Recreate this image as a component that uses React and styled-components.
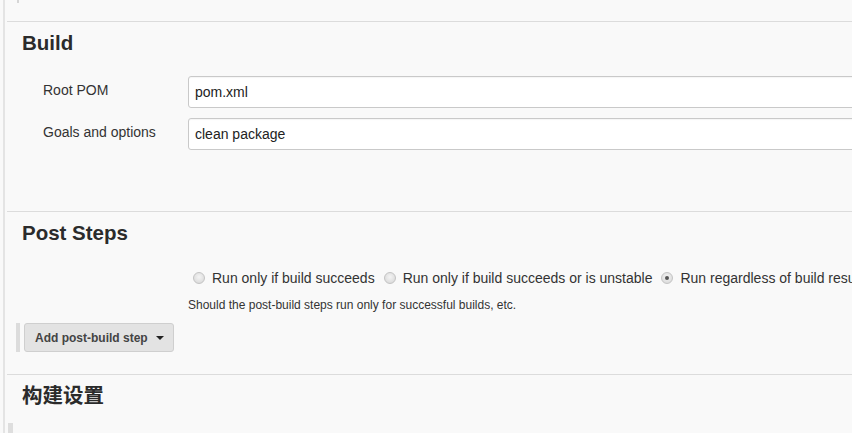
import React from "react";
import styled, { createGlobalStyle } from "styled-components";

const GlobalStyle = createGlobalStyle`
  html, body {
    margin: 0;
    padding: 0;
    background: #f9f9f9;
    overflow: hidden;
  }
  body {
    font-family: "Liberation Sans", Arial, "Noto Sans CJK SC", sans-serif;
    color: #333;
  }
`;

const Page = styled.div`
  width: 1000px;
  min-height: 440px;
  margin-left: 3px;
  border-left: 2px solid #e4e4e4;
  padding-left: 2px;
  display: flex;
  flex-direction: column;
  & > * {
    flex-shrink: 0;
  }
`;

const TopStub = styled.div`
  height: 21px;
  position: relative;
  &::before {
    content: "";
    position: absolute;
    left: 10px;
    top: 0;
    width: 2px;
    height: 3px;
    background: #d6d6d6;
  }
`;

const Section = styled.div`
  border-top: 1px solid #dcdcdc;
  padding-top: 9px;
  padding-bottom: ${(p) => p.$bottom || 0}px;
  display: flex;
  flex-direction: column;
`;

const Heading = styled.h2`
  margin: 0 0 0 15px;
  font-size: 20.5px;
  line-height: 24px;
  font-weight: bold;
  color: #2b2b2b;
  font-family: "Liberation Sans", Arial, "Noto Sans CJK SC", sans-serif;
`;

const Form = styled.div`
  margin-top: 21px;
  display: flex;
  flex-direction: column;
  gap: 10px;
`;

const Row = styled.div`
  display: flex;
  align-items: flex-start;
`;

const Label = styled.div`
  width: 145px;
  padding-left: 36px;
  padding-top: 6px;
  font-size: 14px;
  line-height: 16px;
  color: #333;
`;

const TextBox = styled.div`
  flex: 1;
  height: 30px;
  background: #fff;
  border: 1px solid #c9c9c9;
  border-radius: 3px;
  box-shadow: inset 0 1px 1px rgba(0, 0, 0, 0.04);
  padding-left: 6px;
  font-size: 14px;
  line-height: 30px;
  color: #222;
`;

const Radios = styled.div`
  margin-top: 23px;
  margin-left: 186px;
  display: flex;
  align-items: center;
  height: 20px;
  white-space: nowrap;
`;

const RadioItem = styled.label`
  display: flex;
  align-items: center;
  margin-right: 9px;
  font-size: 14px;
  color: #333;
`;

const RadioDot = styled.span`
  width: 10px;
  height: 10px;
  border-radius: 50%;
  border: 1px solid #c4c4c4;
  background: radial-gradient(circle at 50% 40%, #f4f4f4 0%, #dedede 70%, #d2d2d2 100%);
  margin-right: 7px;
  position: relative;
  &::after {
    content: "";
    display: ${(p) => (p.$checked ? "block" : "none")};
    position: absolute;
    left: 3px;
    top: 3px;
    width: 4px;
    height: 4px;
    border-radius: 50%;
    background: #555;
  }
`;

const Help = styled.div`
  margin-top: 10px;
  margin-left: 181px;
  font-size: 12px;
  line-height: 15px;
  color: #333;
`;

const ButtonBar = styled.div`
  margin-top: 10px;
  margin-left: 9px;
  border-left: 4px solid #dcdcdc;
  padding-left: 4px;
  display: flex;
`;

const DropButton = styled.button`
  height: 29px;
  padding: 0 9px 0 10px;
  display: flex;
  align-items: center;
  gap: 8px;
  background: #e3e3e3;
  border: 1px solid #cfcfcf;
  border-radius: 3px;
  font-family: "Liberation Sans", Arial, sans-serif;
  font-size: 12px;
  font-weight: bold;
  color: #444;
  cursor: pointer;
`;

const Caret = styled.span`
  width: 0;
  height: 0;
  border-left: 4px solid transparent;
  border-right: 4px solid transparent;
  border-top: 4px solid #222;
  margin-top: 1px;
`;

const BottomChunk = styled.div`
  margin-top: 15px;
  margin-left: 1px;
  border-left: 5px solid #dedede;
  height: 20px;
  display: flex;
  align-items: flex-end;
  padding-left: 11px;
`;

const CheckStub = styled.span`
  width: 10px;
  height: 4px;
  background: #bdbdbd;
  border-radius: 1px 1px 0 0;
`;

const options = [
  { label: "Run only if build succeeds", checked: false },
  { label: "Run only if build succeeds or is unstable", checked: false },
  { label: "Run regardless of build result", checked: true },
];

export default function App() {
  return (
    <>
      <GlobalStyle />
      <Page>
        <TopStub />
        <Section $bottom={61}>
          <Heading>Build</Heading>
          <Form>
            <Row>
              <Label>Root POM</Label>
              <TextBox>pom.xml</TextBox>
            </Row>
            <Row>
              <Label>Goals and options</Label>
              <TextBox>clean package</TextBox>
            </Row>
          </Form>
        </Section>
        <Section $bottom={22}>
          <Heading>Post Steps</Heading>
          <Radios>
            {options.map((o) => (
              <RadioItem key={o.label}>
                <RadioDot $checked={o.checked} />
                {o.label}
              </RadioItem>
            ))}
          </Radios>
          <Help>Should the post-build steps run only for successful builds, etc.</Help>
          <ButtonBar>
            <DropButton>
              Add post-build step
              <Caret />
            </DropButton>
          </ButtonBar>
        </Section>
        <Section>
          <Heading>构建设置</Heading>
          <BottomChunk>
            <CheckStub />
          </BottomChunk>
        </Section>
      </Page>
    </>
  );
}
